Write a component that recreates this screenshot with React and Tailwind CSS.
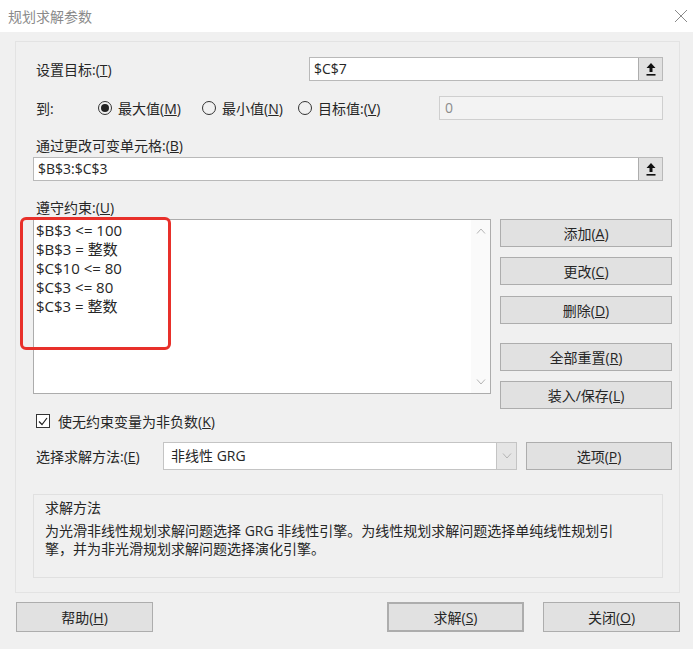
import React from 'react'

function UpIcon() {
  return (
    <svg width="10" height="13" viewBox="0 0 10 13">
      <path d="M5 0 L9.5 5 L6.5 5 L6.5 9 L3.5 9 L3.5 5 L0.5 5 Z" fill="#111" />
      <rect x="0.5" y="11" width="9" height="1.6" fill="#111" />
    </svg>
  )
}

function Chevron({ up }) {
  return (
    <svg width="10" height="6" viewBox="0 0 10 6">
      <path
        d={up ? 'M1 5.5 L5 1 L9 5.5' : 'M1 0.5 L5 5 L9 0.5'}
        fill="none"
        stroke="#b4b4b4"
        strokeWidth="1"
      />
    </svg>
  )
}

function RefInput({ value, width }) {
  return (
    <div className={`flex h-[24px] border border-[#b9b9b9] bg-white ${width}`}>
      <div className="flex-1 pl-[4px] leading-[22px]">{value}</div>
      <div className="flex w-[24px] items-center justify-center border-l border-[#adadad] bg-[#e1e1e1]">
        <UpIcon />
      </div>
    </div>
  )
}

function Radio({ checked, children }) {
  return (
    <div className="flex items-center gap-[6px]">
      <span className="flex h-[14px] w-[14px] items-center justify-center rounded-full border border-[#333]">
        {checked && <span className="h-[8px] w-[8px] rounded-full bg-[#222]" />}
      </span>
      <span>{children}</span>
    </div>
  )
}

function Btn({ children, className = '' }) {
  return (
    <div
      className={`flex h-[28px] items-center justify-center border border-[#adadad] bg-[#e1e1e1] ${className}`}
    >
      {children}
    </div>
  )
}

const constraints = [
  '$B$3 <= 100',
  '$B$3 = 整数',
  '$C$10 <= 80',
  '$C$3 <= 80',
  '$C$3 = 整数'
]

export default function App() {
  return (
    <div className="flex h-[649px] w-[693px] flex-col bg-[#f0f0f0] text-[14px] text-[#262626] font-['Open_Sans','Noto_Sans_CJK_SC',sans-serif]">
      {/* TITLE BAR */}
      <div className="flex h-[32px] items-center justify-between bg-white pl-[8px] pr-[5px]">
        <span className="text-[#8a8a8a]">规划求解参数</span>
        <svg width="14" height="14" viewBox="0 0 14 14">
          <path d="M1 1 L13 13 M13 1 L1 13" stroke="#8a8a8a" strokeWidth="1" />
        </svg>
      </div>

      {/* MAIN PANEL */}
      <div className="pl-[15px] pr-[13px] pt-[9px]">
        <div className="border border-[#e3e3e3] pb-[14px] pl-[17px] pr-[7px] pt-[15px]">
          {/* target */}
          <div className="flex h-[24px] items-center">
            <div className="w-[276px] pl-[3px]">
              设置目标:(<u>T</u>)
            </div>
            <RefInput value="$C$7" width="w-[354px]" />
          </div>

          {/* to */}
          <div className="mt-[15px] flex h-[24px] items-center">
            <div className="w-[65px] pl-[3px]">到:</div>
            <div className="w-[104px]">
              <Radio checked>最大值(<u>M</u>)</Radio>
            </div>
            <div className="w-[96px]">
              <Radio>最小值(<u>N</u>)</Radio>
            </div>
            <div className="w-[141px]">
              <Radio>目标值:(<u>V</u>)</Radio>
            </div>
            <div className="h-[24px] w-[224px] border border-[#cfcfcf] bg-[#f3f3f3] pl-[5px] leading-[22px] text-[#8c8c8c]">
              0
            </div>
          </div>

          {/* changing cells */}
          <div className="mt-[16px] h-[20px] pl-[3px] leading-[20px]">
            通过更改可变单元格:(<u>B</u>)
          </div>
          <div className="mt-[1px]">
            <RefInput value="$B$3:$C$3" width="w-[630px]" />
          </div>

          {/* constraints */}
          <div className="mt-[17px] h-[20px] pl-[3px] leading-[20px]">
            遵守约束:(<u>U</u>)
          </div>
          <div className="mt-[1px] flex h-[190px] items-start">
            <div className="relative flex h-[175px] w-[458px] border border-[#acacac] bg-white">
              <div className="flex-1 pl-[2px] pt-[1px] text-[15px] leading-[19px]">
                {constraints.map((c) => (
                  <div key={c}>{c}</div>
                ))}
              </div>
              <div className="flex w-[19px] flex-col items-center justify-between bg-[#fafafa] pb-[8px] pt-[8px]">
                <Chevron up />
                <Chevron />
              </div>

              {/* red highlight */}
              <div className="absolute left-[-14px] top-[-3px] h-[133px] w-[151px] rounded-[6px] border-[3px] border-[#e8302a]" />
            </div>

            <div className="ml-[9px] flex w-[172px] flex-col">
              <Btn>添加(<u>A</u>)</Btn>
              <Btn className="mt-[10px]">更改(<u>C</u>)</Btn>
              <Btn className="mt-[11px]">删除(<u>D</u>)</Btn>
              <Btn className="mt-[19px]">全部重置(<u>R</u>)</Btn>
              <Btn className="mt-[10px]">装入/保存(<u>L</u>)</Btn>
            </div>
          </div>

          {/* non-negative */}
          <div className="mt-[2px] flex h-[20px] items-center gap-[8px] pl-[3px]">
            <span className="flex h-[14px] w-[14px] items-center justify-center border border-[#333] bg-white">
              <svg width="10" height="9" viewBox="0 0 10 9">
                <path d="M1 4.5 L4 7.5 L9 1" fill="none" stroke="#222" strokeWidth="1.2" />
              </svg>
            </span>
            <span>
              使无约束变量为非负数(<u>K</u>)
            </span>
          </div>

          {/* method */}
          <div className="mt-[11px] flex h-[28px] items-center">
            <div className="w-[130px] pl-[3px]">
              选择求解方法:(<u>E</u>)
            </div>
            <div className="flex h-[28px] w-[354px] border border-[#c4c4c4] bg-white">
              <div className="flex-1 pl-[7px] leading-[26px]">非线性 GRG</div>
              <div className="flex w-[20px] items-center justify-center border-l border-[#c4c4c4] bg-[#e5e5e5]">
                <Chevron />
              </div>
            </div>
            <Btn className="ml-[9px] w-[146px]">
              选项(<u>P</u>)
            </Btn>
          </div>

          {/* description */}
          <div className="mt-[24px] h-[84px] w-[630px] border border-[#e0e0e0] pl-[11px] pt-[4px] leading-[18px]">
            <div>求解方法</div>
            <div className="mt-[5px] whitespace-nowrap">
              为光滑非线性规划求解问题选择 GRG 非线性引擎。为线性规划求解问题选择单纯线性规划引
              <br />
              擎，并为非光滑规划求解问题选择演化引擎。
            </div>
          </div>
        </div>
      </div>

      {/* BOTTOM BUTTONS */}
      <div className="mt-[9px] flex pl-[16px]">
        <Btn className="h-[30px] w-[137px]">
          帮助(<u>H</u>)
        </Btn>
        <Btn className="ml-[234px] h-[30px] w-[137px] border-[2px] border-[#1c7fd6]">
          求解(<u>S</u>)
        </Btn>
        <Btn className="ml-[19px] h-[30px] w-[137px]">
          关闭(<u>O</u>)
        </Btn>
      </div>
    </div>
  )
}
